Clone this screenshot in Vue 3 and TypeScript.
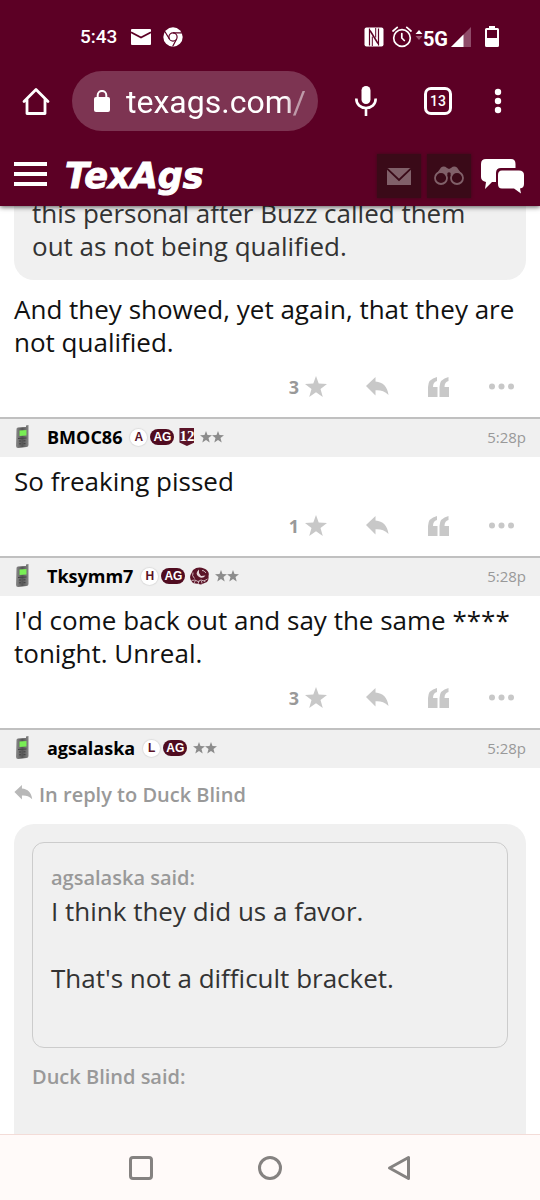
<script setup lang="ts">
interface Post {
  user: string
  letter: string
  emblem?: 'shield' | 'seal'
  time: string
  text?: string
  likes?: number
}

const posts: Post[] = [
  { user: 'BMOC86', letter: 'A', emblem: 'shield', time: '5:28p', text: 'So freaking pissed', likes: 1 },
  { user: 'Tksymm7', letter: 'H', emblem: 'seal', time: '5:28p', text: "I'd come back out and say the same **** tonight. Unreal.", likes: 3 },
  { user: 'agsalaska', letter: 'L', time: '5:28p' },
]
const likeCounts: (number | undefined)[] = [3, ...posts.map((p) => p.likes)]
const url = 'texags.com/'
</script>

<template>
  <div class="screen">
    <header class="top">
      <div class="status">
        <span class="clock">5:43</span>
        <svg class="s-mail" width="20" height="16" viewBox="0 0 20 16"><rect width="20" height="16" rx="1" fill="#fff" /><path d="M0 3.2 10 8.6 20 3.2" fill="none" stroke="#5c0025" stroke-width="1.8" /></svg>
        <svg class="s-chrome" width="20" height="20" viewBox="0 0 20 20"><circle cx="10" cy="10" r="9.7" fill="#fff" /><g fill="none" stroke="#5c0025" stroke-width="1.2"><circle cx="10" cy="10" r="4.1" /><path d="M10 5.9H19M6.4 12 2 4.7M13.6 12 9.6 19.5" /></g></svg>
        <span class="grow"></span>
        <svg width="20" height="20" viewBox="0 0 20 20"><rect x=".5" y=".5" width="19" height="19" rx="2" fill="#fff" /><path d="M5.500 1.500V18.500M14.500 1.500V18.500" stroke="#5c0025" stroke-width="1.200" /><path d="M6 3.500 14 16.500" stroke="#5c0025" stroke-width="1.500" /><path d="M8.300 19V9.500M11.700 1V10.500" stroke="#5c0025" stroke-width="1" /></svg>
        <svg class="s-alarm" width="20" height="22" viewBox="0 0 20 22"><g fill="none" stroke="#fff" stroke-width="1.7" stroke-linecap="round"><circle cx="10" cy="12" r="8.3" /><path d="M1 5 5.2 1.4M19 5 14.8 1.4M9.8 7.5V12L12.3 14.5" /></g></svg>
        <svg class="s-data" width="8" height="10" viewBox="0 0 8 10"><path d="M4 0 7.5 4H.5Z" fill="#fff" /><path d="M4 10 7.5 6H.5Z" fill="#9d5774" /></svg>
        <span class="fiveg">5G</span>
        <svg class="s-signal" width="20" height="20" viewBox="0 0 20 20"><path d="M20 0V20H0Z" fill="#8f4b69" /><path d="M12.5 7.5V20H0Z" fill="#fff" /></svg>
        <svg width="14" height="21" viewBox="0 0 14 21"><path d="M4 0H10V2H12.5Q14 2 14 3.5V19.5Q14 21 12.500 21H1.500Q0 21 0 19.500V3.500Q0 2 1.500 2H4Z" fill="#fff" /><rect x="2" y="4" width="10" height="8" fill="#5c0025" /></svg>
      </div>

      <div class="browser">
        <button class="plain" aria-label="Home"><svg width="28" height="28" viewBox="0 0 28 28"><path d="M2 14.500 14 2.500 26 14.500M5 12.500V26.500H23V12.500" fill="none" stroke="#fff" stroke-width="2.800" stroke-linecap="round" stroke-linejoin="round" /></svg></button>
        <div class="omnibox">
          <svg width="16" height="22" viewBox="0 0 16 22"><rect y="7" width="16" height="15" rx="2" fill="#fff" /><path d="M3.700 8V5.200a4.300 4.300 0 0 1 8.600 0V8" fill="none" stroke="#fff" stroke-width="2" /></svg>
          <input class="url" type="text" :value="url" aria-label="Address" />
        </div>
        <button class="plain mic" aria-label="Voice search"><svg width="22" height="30" viewBox="0 0 22 30"><rect x="6.500" y="0" width="9" height="18" rx="4.500" fill="#fff" /><path d="M1.300 12.500C1.300 18.500 5.500 22 11 22S20.700 18.500 20.700 12.500M11 22V30" fill="none" stroke="#fff" stroke-width="2.600" /></svg></button>
        <button class="tabs" aria-label="Open tabs">13</button>
        <button class="plain" aria-label="Menu"><svg width="8" height="26" viewBox="0 0 8 26"><g fill="#fff"><circle cx="4" cy="4" r="3.200" /><circle cx="4" cy="13" r="3.200" /><circle cx="4" cy="22" r="3.200" /></g></svg></button>
      </div>

      <div class="site">
        <button class="plain burger" aria-label="Site menu"><svg width="33" height="24" viewBox="0 0 33 24"><path d="M0 2H33M0 12H33M0 22H33" stroke="#fff" stroke-width="4" /></svg></button>
        <a class="logo" href="#">TexAgs</a>
        <button class="tile" aria-label="Mail"><svg width="24" height="17" viewBox="0 0 24 17"><rect width="24" height="17" fill="#806069" /><path d="M0 .5 12 12 24 .5" fill="none" stroke="#3a0a18" stroke-width="1.800" /></svg></button>
        <button class="tile" aria-label="Watched"><svg width="30" height="20" viewBox="0 0 30 20"><path d="M1 10 7 1.500Q10-.5 13 2L15 3 17 2Q20-.5 23 1.500L29 10 20 12 17 9H13L10 12Z" fill="#806069" /><g fill="#3a0a18" stroke="#806069" stroke-width="1.800"><circle cx="7" cy="12" r="6" /><circle cx="23" cy="12" r="6" /></g><circle cx="15" cy="8" r="1.800" fill="#3a0a18" /></svg></button>
        <button class="plain chat" aria-label="Forums"><svg width="43" height="35" viewBox="0 0 43 35"><path d="M5 0H30Q34.500 0 34.500 5V9H20Q15 9 15 14V23H11L4 30 5 23Q0 22 0 18V5Q0 0 5 0Z" fill="#fff" /><path d="M21 11.500H38Q43 11.500 43 16V25Q43 29 39 29.500L40 34.500 33 29.500H21Q17 29.500 17 25V16Q17 11.500 21 11.500Z" fill="#fff" /></svg></button>
      </div>
    </header>

    <main class="thread">
      <blockquote class="quote first-quote">this personal after Buzz called them out as not being qualified.</blockquote>
      <template v-for="(likes, i) in likeCounts" :key="i">
        <article class="post">
          <header v-if="i > 0" class="post-head">
            <svg class="phone" width="15" height="24" viewBox="0 0 15 24"><defs><linearGradient :id="'case' + i"><stop offset="0" stop-color="#8a8a8a" /><stop offset=".5" stop-color="#555" /><stop offset="1" stop-color="#858585" /></linearGradient></defs><path d="M1.500 4Q1.500 2.500 3 2.500L11 2V.5L13.500 0V20Q13.500 22 11.500 22L3 23Q1 23 1 21Z" :fill="'url(#case' + i + ')'" /><path d="M4.500 5.500 11.500 5V10.500L4.500 11Z" fill="#79ef55" /><path d="M3 13.500 11.500 13M4 16 6 16M8.500 15.800H10.500M4 18.800H6M8.500 18.600H10.500" stroke="#444" stroke-width="1" /></svg>
            <a class="user" href="#">{{ posts[i - 1].user }}</a>
            <span class="letter">{{ posts[i - 1].letter }}</span>
            <span class="ag">AG</span>
            <span v-if="posts[i - 1].emblem === 'shield'" class="shield">12</span>
            <svg v-if="posts[i - 1].emblem === 'seal'" class="seal" width="19" height="18" viewBox="0 0 19 18"><path d="M3 3Q8-1 14 1.500T18.500 9Q19 13 17 15L11 17.500 3 16Q-1 13 .5 8Z" fill="#5b1428" /><path d="M9 2.500Q4.500 6.500 8.500 9.500T15.500 8.500L11 9 9 6Z" fill="#e6d5da" /><path d="M12 3.500Q14 3 16 6M3 5.500Q1.500 8.500 4.500 11.500M1.500 13.500 5 13 8 14.500 11 13 14 14 17.500 12M4 16 5.500 13.500M8 17 9 14M12 16.500 11.500 14M15 15 14 13" fill="none" stroke="#d9c3ca" stroke-width=".9" /></svg>
            <svg class="rank" width="24" height="12" viewBox="0 0 24 12"><path d="M6 0 7.500 4.100 12 4.300 8.500 7 9.700 11.500 6 9 2.300 11.500 3.500 7 0 4.300 4.500 4.100ZM18 0 19.500 4.100 24 4.300 20.500 7 21.700 11.500 18 9 14.300 11.500 15.500 7 12 4.300 16.500 4.100Z" fill="#8c8c8c" /></svg>
            <time class="time">{{ posts[i - 1].time }}</time>
          </header>
          <template v-if="likes !== undefined">
            <p class="text" :class="{ opening: i === 0 }">{{ i === 0 ? 'And they showed, yet again, that they are not qualified.' : posts[i - 1].text }}</p>
            <div class="actions">
              <button class="act">{{ likes }}<svg class="star" width="22" height="21" viewBox="0 0 22 21"><path d="M11 0 13.700 7.600 22 7.900 15.500 12.900 17.800 21 11 16.300 4.200 21 6.500 12.900 0 7.900 8.300 7.600Z" fill="#c8c8c8" /></svg></button>
              <button class="act" aria-label="Reply"><svg width="23" height="19" viewBox="0 0 23 19"><path d="M0 9 9.500 0V4.500C17 5 21.500 9.500 22.500 18 18.500 14 14.500 13 9.500 13.300V18.500Z" fill="#c8c8c8" /></svg></button>
              <button class="act" aria-label="Quote"><svg width="21" height="20" viewBox="0 0 21 20"><path d="M9 0V4Q5 5 5 10H9.500V20H0V10Q0 2 9 0ZM20.500 0V4Q16.500 5 16.500 10H21V20H11.500V10Q11.500 2 20.500 0Z" fill="#c8c8c8" /></svg></button>
              <button class="act" aria-label="More"><svg width="27" height="7" viewBox="0 0 27 7"><g fill="#c8c8c8"><circle cx="4" cy="3.500" r="3" /><circle cx="13.500" cy="3.500" r="3" /><circle cx="23" cy="3.500" r="3" /></g></svg></button>
            </div>
          </template>
          <template v-else>
            <a class="reply-to" href="#"><svg width="19" height="15" viewBox="0 0 23 19"><path d="M0 9 9.500 0V4.500C17 5 21.500 9.500 22.500 18 18.500 14 14.500 13 9.500 13.300V18.500Z" fill="#b8b8b8" /></svg><span>In reply to Duck Blind</span></a>
            <blockquote class="quote outer">
              <blockquote class="inner">
                <cite>agsalaska said:</cite>
                <p>I think they did us a favor.</p>
                <p class="gap">That's not a difficult bracket.</p>
              </blockquote>
              <cite>Duck Blind said:</cite>
            </blockquote>
          </template>
        </article>
      </template>
    </main>

    <nav class="system" aria-label="System">
      <button aria-label="Recent apps"><svg width="26" height="26" viewBox="0 0 26 26"><rect x="2.500" y="2.500" width="21" height="21" rx="2.500" fill="none" stroke="#858281" stroke-width="3" /></svg></button>
      <button aria-label="Home screen"><svg width="26" height="26" viewBox="0 0 26 26"><circle cx="13" cy="13" r="10.500" fill="none" stroke="#858281" stroke-width="3" /></svg></button>
      <button aria-label="Back"><svg width="26" height="26" viewBox="0 0 26 26"><path d="M22.500 2.500V23.500L3.500 13Z" fill="none" stroke="#858281" stroke-width="3" stroke-linejoin="round" /></svg></button>
    </nav>
  </div>
</template>

<style>
body { margin: 0; background: #fff; }
</style>

<style scoped>
* { box-sizing: border-box; }
.screen { display: flex; flex-direction: column; height: 100vh; background: #fff; font-family: "Open Sans", sans-serif; color: #111; }
svg { display: block; flex: none; }
button { border: 0; padding: 0; background: none; font: inherit; color: inherit; cursor: pointer; }
a { color: inherit; text-decoration: none; }
p, blockquote { margin: 0; }
cite { display: block; font-style: normal; font-weight: 600; font-size: 20px; line-height: 32px; color: #999; }

.top { position: relative; flex: none; background: #5c0025; color: #fff; box-shadow: 0 1px 5px rgba(0, 0, 0, .65); }
.status { display: flex; align-items: center; height: 71px; padding: 2px 41px 0 80px; font-family: Roboto, sans-serif; }
.clock { font-size: 19px; font-weight: 500; }
.s-mail { margin-left: 14px; }
.s-chrome { margin-left: 12px; }
.grow { flex: 1; }
.s-alarm { margin-left: 8px; }
.s-data { margin-left: 3px; margin-bottom: 4px; }
.fiveg { font-size: 20px; font-weight: 700; margin-top: 4px; }
.s-signal { margin: 0 14px 0 3px; }

.browser { display: flex; align-items: center; height: 60px; padding: 0 38px 0 22px; }
.plain { display: flex; align-items: center; }
.omnibox { display: flex; align-items: center; flex: 1; min-width: 0; height: 60px; margin: 0 37px 0 22px; padding: 0 12px 0 22px; border-radius: 30px; background: #7d3452; }
.url { flex: 1; min-width: 0; margin-left: 16px; padding: 2px 0 0; border: 0; outline: 0; background: none; color: #fff; font: 32px/40px Roboto, sans-serif; mask-image: linear-gradient(to right, #000 calc(100% - 20px), rgba(0, 0, 0, .5) calc(100% - 12px)); }
.mic { margin-right: 47px; }
.tabs { width: 28px; height: 28px; margin-right: 42px; border: 3px solid #fff; border-radius: 7px; font: 500 14px/20px Roboto, sans-serif; }

.site { display: flex; align-items: center; height: 75px; padding: 15px 16px 0 14px; }
.burger { padding-bottom: 5px; }
.logo { margin: 0 auto 0 18px; font: italic 700 35px/44px "DejaVu Sans", sans-serif; -webkit-text-stroke: 1px #fff; }
.tile { display: flex; align-items: center; justify-content: center; width: 44px; height: 44px; margin-right: 6px; background: #3a0a18; box-shadow: 0 0 3px #3a0a18; }
.chat { margin-left: 4px; }

.thread { flex: 1; min-height: 0; overflow: hidden; }
.quote { margin: 0 14px; background: #f0f0f0; border-radius: 20px; color: #333; font-size: 26px; line-height: 33px; }
.first-quote { margin-top: -9px; padding: 0 18px 17px; border-radius: 0 0 20px 20px; }
.text { padding: 8px 14px 0; font-size: 26px; line-height: 33px; }
.opening { padding-top: 13px; }
.actions { display: flex; align-items: center; justify-content: flex-end; gap: 39px; height: 58px; padding: 0 25px 3px 0; }
.act { display: flex; align-items: center; color: #999; font-size: 18px; font-weight: 700; }
.star { margin-left: 6px; }

.post-head { display: flex; align-items: center; height: 40px; padding: 0 14px 2px 15px; border-top: 2px solid #c0c0c0; background: #f0f0f0; }
.phone { margin-right: 17px; }
.user { margin-right: 8px; color: #000; font-size: 18px; font-weight: 700; }
.letter, .ag { font: 700 12px/16px "Liberation Sans", sans-serif; text-align: center; }
.letter { width: 17px; height: 17px; margin-right: 3px; border-radius: 50%; background: #fff; box-shadow: 0 0 1px 1px #ddd; color: #5b1428; }
.ag { width: 24px; height: 16px; border-radius: 8px; background: #500c20; color: #fff; }
.shield { display: flex; justify-content: center; width: 15px; height: 18px; margin-left: 5px; background: #5b1428; color: #fff; font: 700 15px/16px "Liberation Serif", serif; clip-path: polygon(0 0, 100% 0, 100% 80%, 50% 100%, 0 80%); }
.seal { margin-left: 5px; }
.rank { margin-left: 6px; }
.time { margin-left: auto; color: #999; font-size: 15px; }

.reply-to { display: flex; align-items: center; height: 56px; padding: 0 14px 3px; color: #999; font-size: 20px; font-weight: 600; }
.reply-to svg { margin: 0 6px 4px 0; }
.outer { padding: 18px 18px 60px; }
.inner { min-height: 206px; margin-bottom: 13px; padding: 19px 18px; border: 1px solid #ccc; border-radius: 12px; }
.inner p { padding-top: 1px; }
.inner .gap { padding-top: 34px; }

.system { display: flex; flex: none; height: 66px; padding: 0 76px; border-top: 1px solid #f3dcd8; background: #fffaf9; }
.system button { display: flex; flex: 1; align-items: center; justify-content: center; }
</style>
